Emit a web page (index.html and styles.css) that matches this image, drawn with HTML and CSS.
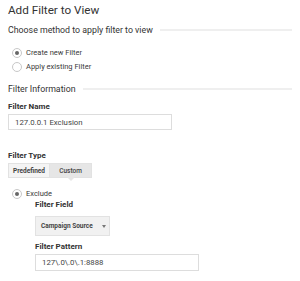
FILE: index.html
```html
<!DOCTYPE html>
<html lang="en">
<head>
  <meta charset="UTF-8">
  <title>Add Filter to View</title>
  <link rel="stylesheet" href="styles.css">
</head>
<body>
  <div class="page">
    <h1 class="title">Add Filter to View</h1>

    <div class="section-head first"><span>Choose method to apply filter to view</span></div>
    <div class="radios">
      <div class="radio checked"><span class="dot"></span>Create new Filter</div>
      <div class="radio"><span class="dot"></span>Apply existing Filter</div>
    </div>

    <div class="section-head info"><span>Filter Information</span></div>

    <div class="label name-label">Filter Name</div>
    <div class="input name-input">127.0.0.1 Exclusion</div>

    <div class="label type-label">Filter Type</div>
    <div class="tabs">
      <div class="tab">Predefined</div>
      <div class="tab active">Custom</div>
    </div>

    <div class="radio checked exclude"><span class="dot"></span>Exclude</div>
    <div class="sub">
      <div class="label field-label">Filter Field</div>
      <div class="select">Campaign Source <span class="arrow"></span></div>
      <div class="label pattern-label">Filter Pattern</div>
      <div class="input pattern-input">127\.0\.0\.1:8888</div>
    </div>
  </div>
</body>
</html>
```

FILE: styles.css
```css
body {
  margin: 0;
  background: #fff;
  font-family: Roboto, "Noto Sans", sans-serif;
  color: #333;
}

.page {
  padding: 0 8px;
}

.title {
  margin: 0;
  font-size: 11.7px;
  font-weight: 400;
  line-height: 20px;
  color: #333;
}

.section-head {
  display: flex;
  align-items: center;
  font-size: 8.8px;
  line-height: 12px;
  color: #333;
}

.section-head::after {
  content: "";
  flex: 1;
  height: 2px;
  background: #efefef;
  margin-left: 7px;
}

.section-head.first {
  margin-top: 4px;
}

.section-head.info {
  margin-top: 10px;
}

.radios {
  margin-top: 11px;
  display: flex;
  flex-direction: column;
  gap: 2px;
}

.radio {
  display: flex;
  align-items: center;
  font-size: 7.5px;
  line-height: 12px;
  color: #3a3a3a;
  padding-left: 4px;
}

.dot {
  width: 8px;
  height: 8px;
  border: 1px solid #c8c8c8;
  border-radius: 50%;
  margin-right: 4px;
  display: flex;
  align-items: center;
  justify-content: center;
}

.checked .dot::after {
  content: "";
  width: 4px;
  height: 4px;
  border-radius: 50%;
  background: #666;
}

.label {
  font-size: 8px;
  font-weight: 700;
  line-height: 10px;
  color: #333;
}

.name-label {
  margin-top: 7px;
}

.input {
  border: 1px solid #ddd;
  font-size: 7.8px;
  color: #444;
  padding: 0 6px;
  display: flex;
  align-items: center;
  box-sizing: border-box;
}

.name-input {
  margin-top: 2px;
  width: 164px;
  height: 16px;
}

.type-label {
  margin-top: 21px;
}

.tabs {
  margin-top: 2px;
  display: flex;
}

.tab {
  position: relative;
  width: 42px;
  height: 15px;
  box-sizing: border-box;
  border: 1px solid #e2e2e2;
  background: #f4f4f4;
  font-size: 6.5px;
  font-weight: 700;
  color: #444;
  display: flex;
  align-items: center;
  justify-content: center;
}

.tab.active {
  background: #e6e6e6;
  font-weight: 500;
  border-left: none;
}

.tab.active::after {
  content: "";
  position: absolute;
  left: 50%;
  top: 100%;
  margin-left: -4px;
  border-left: 4px solid transparent;
  border-right: 4px solid transparent;
  border-top: 4px solid #e6e6e6;
}

.exclude {
  margin-top: 10px;
}

.sub {
  padding-left: 27px;
}

.field-label {
  margin-top: 0;
}

.select {
  margin-top: 6px;
  width: 75px;
  height: 20px;
  box-sizing: border-box;
  border: 1px solid #e2e2e2;
  background: #f1f1f1;
  font-size: 6.5px;
  font-weight: 700;
  color: #444;
  white-space: nowrap;
  display: flex;
  align-items: center;
  padding-left: 5px;
}

.arrow {
  margin-left: 9px;
  border-left: 2.5px solid transparent;
  border-right: 2.5px solid transparent;
  border-top: 3px solid #777;
}

.pattern-label {
  margin-top: 6px;
}

.pattern-input {
  margin-top: 2px;
  width: 164px;
  height: 17px;
}
```
